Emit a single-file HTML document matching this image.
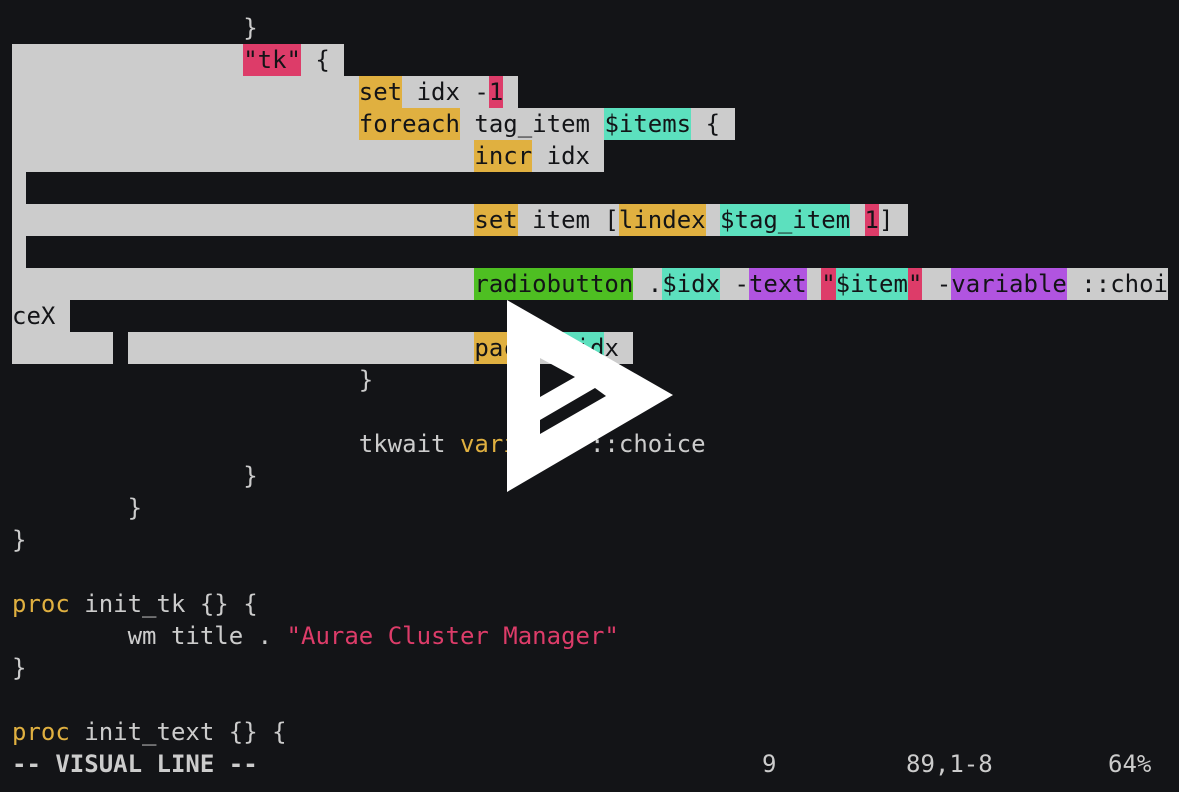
<!DOCTYPE html>
<html><head><meta charset="utf-8"><style>
body{margin:0;width:1179px;height:792px;background:#131417;overflow:hidden;position:relative;font-family:"DejaVu Sans Mono","Liberation Mono",monospace;font-size:24px;color:#cccccc}
.r{position:absolute;left:12px;height:32px;line-height:32px;white-space:pre}
.r span{display:inline-block;height:32px;vertical-align:top}
.s{background:#cccccc;color:#131417}
.y{background:#e0b040;color:#131417}
.rd{background:#dd3c69;color:#131417}
.t{background:#5ce0be;color:#131417}
.g{background:#4ebf22;color:#131417}
.p{background:#b154e0;color:#131417}
.k{background:#131417}
.r span.yt{color:#e0b040;background:none}.r span.rt{color:#dd3c69;background:none}
</style></head><body>
<div class="r" style="top:12px">                }</div>
<div class="r" style="top:44px"><span class="s">                </span><span class="rd">"tk"</span><span class="s"> { </span></div>
<div class="r" style="top:76px"><span class="s">                        </span><span class="y">set</span><span class="s"> idx -</span><span class="rd">1</span><span class="s"> </span></div>
<div class="r" style="top:108px"><span class="s">                        </span><span class="y">foreach</span><span class="s"> tag_item </span><span class="t">$items</span><span class="s"> { </span></div>
<div class="r" style="top:140px"><span class="s">                                </span><span class="y">incr</span><span class="s"> idx </span></div>
<div class="r" style="top:172px"><span class="s"> </span></div>
<div class="r" style="top:204px"><span class="s">                                </span><span class="y">set</span><span class="s"> item [</span><span class="y">lindex</span><span class="s"> </span><span class="t">$tag_item</span><span class="s"> </span><span class="rd">1</span><span class="s">] </span></div>
<div class="r" style="top:236px"><span class="s"> </span></div>
<div class="r" style="top:268px"><span class="s">                                </span><span class="g">radiobutton</span><span class="s"> .</span><span class="t">$idx</span><span class="s"> -</span><span class="p">text</span><span class="s"> </span><span class="rd">"</span><span class="t">$item</span><span class="rd">"</span><span class="s"> -</span><span class="p">variable</span><span class="s"> ::choi</span></div>
<div class="r" style="top:300px"><span class="s">ceX </span></div>
<div class="r" style="top:332px"><span class="s">       </span><span class="k"> </span><span class="s">                        </span><span class="y">pack</span><span class="s"> .</span><span class="t">$id</span><span class="s">x </span></div>
<div class="r" style="top:364px">                        }</div>
<div class="r" style="top:428px">                        tkwait <span class="yt">variable</span> ::choice</div>
<div class="r" style="top:460px">                }</div>
<div class="r" style="top:492px">        }</div>
<div class="r" style="top:524px">}</div>
<div class="r" style="top:588px"><span class="yt">proc</span> init_tk {} {</div>
<div class="r" style="top:620px">        wm title . <span class="rt">"Aurae Cluster Manager"</span></div>
<div class="r" style="top:652px">}</div>
<div class="r" style="top:716px"><span class="yt">proc</span> init_text {} {</div>
<div class="r" style="top:748px"><b>-- VISUAL LINE --</b></div>
<div class="r" style="top:748px;left:762px">9</div>
<div class="r" style="top:748px;left:906px">89,1-8</div>
<div class="r" style="top:748px;left:1108px">64%</div>
<svg style="position:absolute;left:0;top:0" width="1179" height="792">
<path fill="#fff" fill-rule="evenodd" d="M507 300L673 395L507 492Z M540 358L575 377L540 397Z M540 420L595 388L606 396L540 434Z"/>
</svg>
</body></html>
